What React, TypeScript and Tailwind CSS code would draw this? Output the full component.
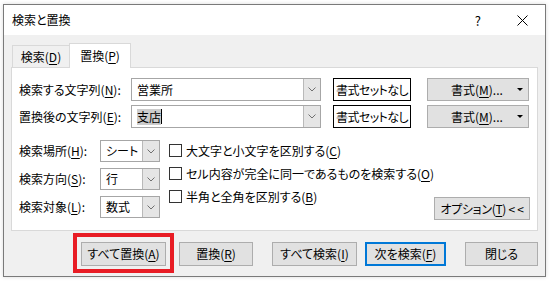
import type { ReactNode } from "react";

function U({ children }: { children: ReactNode }) {
  return <span className="underline decoration-1 underline-offset-[2px]">{children}</span>;
}

function Chevron() {
  return (
    <svg width="8" height="5" viewBox="0 0 8 5">
      <polyline points="0.5,0.5 4,4 7.5,0.5" fill="none" stroke="#707070" strokeWidth="1" />
    </svg>
  );
}

function Combo({ className, children }: { className: string; children?: ReactNode }) {
  return (
    <div className={`flex border border-[#a6a6a6] bg-white ${className}`}>
      <div className="flex flex-1 items-center pl-[5px]">{children}</div>
      <div className="flex w-[17px] items-center justify-center border-l border-[#b9b9b9] bg-[#e5e5e5]">
        <Chevron />
      </div>
    </div>
  );
}

function Btn({ className, children }: { className: string; children: ReactNode }) {
  return (
    <div className={`flex items-center justify-center border bg-[#e1e1e1] ${className}`}>{children}</div>
  );
}

function Check({ children }: { children: ReactNode }) {
  return (
    <div className="flex h-[13px] items-center gap-[4px]">
      <div className="h-[13px] w-[13px] border border-[#333333] bg-white" />
      <span>{children}</span>
    </div>
  );
}

function FormatRow({ label, children }: { label: ReactNode; children: ReactNode }) {
  return (
    <div className="flex h-[23px] items-center">
      <div className="w-[112px]">{label}</div>
      <Combo className="h-[23px] w-[190px]">{children}</Combo>
      <div className="ml-[12px] flex h-[23px] w-[78px] items-center justify-center border border-black bg-white tracking-[-0.6px]">
        書式セットなし
      </div>
      <div className="ml-[16px] flex h-[23px] w-[102px] items-center border border-[#adadad] bg-[#e1e1e1] pl-[23px] pr-[5px]">
        <span>
          書式(<U>M</U>)...
        </span>
        <svg className="ml-auto" width="6" height="3" viewBox="0 0 6 3">
          <polygon points="0,0 6,0 3,3" fill="#000" />
        </svg>
      </div>
    </div>
  );
}

export default function App() {
  return (
    <div className="h-[282px] w-[550px] whitespace-nowrap bg-white pl-[3px] pt-[4px] font-['Noto_Sans_CJK_JP','Noto_Sans',sans-serif] text-[12px] leading-none text-black [font-feature-settings:'palt']">
      <div className="flex h-[273px] w-[543px] flex-col border border-[#7a7a7a] bg-[#f0f0f0] shadow-[0_0_4px_rgba(0,0,0,0.15)]">
        {/* title bar */}
        <div className="flex h-[30px] items-center bg-white pl-[8px]">
          <span>検索と置換</span>
          <span className="ml-auto text-[13px]">?</span>
          <svg className="ml-[36px] mr-[17px]" width="11" height="11" viewBox="0 0 11 11">
            <path d="M0.5 0.5 L10.5 10.5 M10.5 0.5 L0.5 10.5" stroke="#000" strokeWidth="1" />
          </svg>
        </div>

        <div className="flex flex-1 flex-col px-[7px] pt-[8px]">
          {/* tabs */}
          <div className="flex h-[24px] items-end pl-px">
            <div className="flex h-[22px] w-[57px] items-center justify-center border-l border-t border-[#d9d9d9] bg-[#f0f0f0]">
              検索(<U>D</U>)
            </div>
            <div className="relative z-10 -mb-px flex h-[25px] w-[62px] items-center justify-center border-x border-t border-[#d9d9d9] bg-white">
              置換(<U>P</U>)
            </div>
          </div>

          {/* panel */}
          <div className="flex h-[164px] flex-col border border-[#d9d9d9] bg-white pl-[7px] pt-[10px]">
            <FormatRow
              label={
                <>
                  検索する文字列(<U>N</U>):
                </>
              }
            >
              営業所
            </FormatRow>
            <div className="mt-[4px]">
              <FormatRow
                label={
                  <>
                    置換後の文字列(<U>E</U>):
                  </>
                }
              >
                <span className="bg-[#cccccc] py-[2px]">支店</span>
                <span className="h-[15px] w-px bg-black" />
              </FormatRow>
            </div>

            <div className="mt-[12px] flex">
              <div className="flex flex-col gap-[6px]">
                <div className="flex h-[22px] items-center">
                  <span className="w-[81px]">
                    検索場所(<U>H</U>):
                  </span>
                  <Combo className="h-[22px] w-[60px]">シート</Combo>
                </div>
                <div className="flex h-[22px] items-center">
                  <span className="w-[81px]">
                    検索方向(<U>S</U>):
                  </span>
                  <Combo className="h-[22px] w-[60px]">行</Combo>
                </div>
                <div className="flex h-[22px] items-center">
                  <span className="w-[81px]">
                    検索対象(<U>L</U>):
                  </span>
                  <Combo className="h-[22px] w-[60px]">数式</Combo>
                </div>
              </div>

              <div className="ml-[9px] mt-[4px] flex flex-col gap-[10px]">
                <Check>
                  大文字と小文字を区別する(<U>C</U>)
                </Check>
                <Check>
                  セル内容が完全に同一であるものを検索する(<U>O</U>)
                </Check>
                <Check>
                  半角と全角を区別する(<U>B</U>)
                </Check>
              </div>

              <Btn className="ml-auto mr-[7px] mt-[57px] h-[23px] w-[102px] border-[#adadad] tracking-[-0.3px]">
                オプション(<U>T</U>) &lt; &lt;
              </Btn>
            </div>
          </div>

          {/* buttons */}
          <div className="mt-[2px] flex items-start">
            <div className="ml-[62px] h-[40px] w-[101px] border-4 border-[#e81c24] pl-[4px] pt-[5px]">
              <Btn className="h-[24px] w-[85px] border-[#adadad]">
                すべて置換(<U>A</U>)
              </Btn>
            </div>
            <Btn className="ml-[5px] mt-[9px] h-[24px] w-[74px] border-[#adadad]">
              置換(<U>R</U>)
            </Btn>
            <Btn className="ml-[19px] mt-[9px] h-[24px] w-[85px] border-[#adadad]">
              すべて検索(<U>I</U>)
            </Btn>
            <Btn className="ml-[8px] mt-[9px] h-[24px] w-[81px] border-2 border-[#0078d7]">
              次を検索(<U>F</U>)
            </Btn>
            <Btn className="ml-[19px] mt-[9px] h-[24px] w-[73px] border-[#adadad]">閉じる</Btn>
          </div>
        </div>
      </div>
    </div>
  );
}
